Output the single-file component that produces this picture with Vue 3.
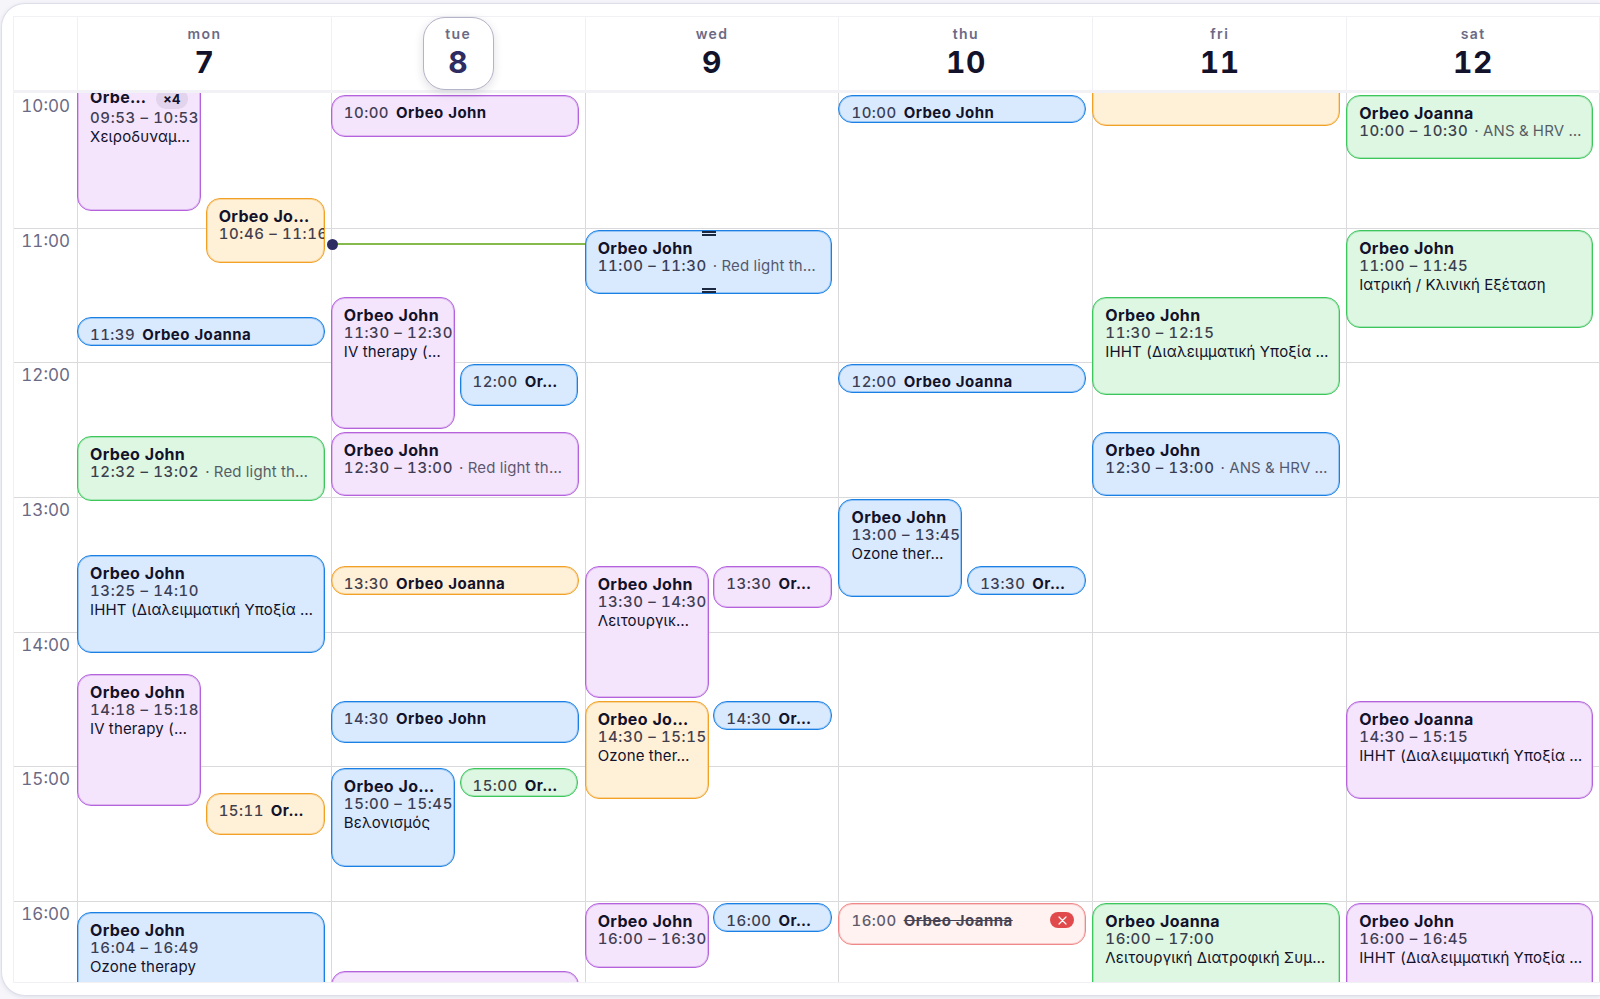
<script setup>
const FIRST_HOUR = 10
const VISIBLE_HOURS = 6.6
const hours = ['10:00', '11:00', '12:00', '13:00', '14:00', '15:00', '16:00']

const IHHT = 'IHHT (Διαλειμματική Υποξία …'
const IV = 'IV therapy (…'
const OZONE = 'Ozone ther…'
const RED = 'Red light th…'
const ANS = 'ANS & HRV …'

const days = [
  {
    name: 'mon', date: 7,
    events: [
      { start: '09:53', end: '10:53', who: 'Orbe…', what: 'Χειροδυναμ…', tone: 'purple', lane: 'left', count: '×4' },
      { start: '10:46', end: '11:16', who: 'Orbeo Jo…', tone: 'orange', lane: 'right' },
      { start: '11:39', end: '11:53', who: 'Orbeo Joanna', tone: 'blue', brief: true },
      { start: '12:32', end: '13:02', who: 'Orbeo John', what: RED, inline: true, tone: 'green' },
      { start: '13:25', end: '14:10', who: 'Orbeo John', what: IHHT, tone: 'blue' },
      { start: '14:18', end: '15:18', who: 'Orbeo John', what: IV, tone: 'purple', lane: 'left' },
      { start: '15:11', end: '15:31', who: 'Or…', tone: 'orange', lane: 'right', brief: true },
      { start: '16:04', end: '16:49', who: 'Orbeo John', what: 'Ozone therapy', tone: 'blue' }
    ]
  },
  {
    name: 'tue', date: 8, today: true, now: '11:07',
    events: [
      { start: '10:00', end: '10:20', who: 'Orbeo John', tone: 'purple', brief: true },
      { start: '11:30', end: '12:30', who: 'Orbeo John', what: IV, tone: 'purple', lane: 'left' },
      { start: '12:00', end: '12:20', who: 'Or…', tone: 'blue', lane: 'right', brief: true },
      { start: '12:30', end: '13:00', who: 'Orbeo John', what: RED, inline: true, tone: 'purple' },
      { start: '13:30', end: '13:44', who: 'Orbeo Joanna', tone: 'orange', brief: true },
      { start: '14:30', end: '14:50', who: 'Orbeo John', tone: 'blue', brief: true },
      { start: '15:00', end: '15:45', who: 'Orbeo Jo…', what: 'Βελονισμός', tone: 'blue', lane: 'left' },
      { start: '15:00', end: '15:14', who: 'Or…', tone: 'green', lane: 'right', brief: true },
      { start: '16:30', end: '17:00', who: 'Orbeo John', tone: 'purple' }
    ]
  },
  {
    name: 'wed', date: 9,
    events: [
      { start: '11:00', end: '11:30', who: 'Orbeo John', what: RED, inline: true, tone: 'blue', handles: true },
      { start: '13:30', end: '14:30', who: 'Orbeo John', what: 'Λειτουργικ…', tone: 'purple', lane: 'left' },
      { start: '13:30', end: '13:50', who: 'Or…', tone: 'purple', lane: 'right', brief: true },
      { start: '14:30', end: '15:15', who: 'Orbeo Jo…', what: OZONE, tone: 'orange', lane: 'left' },
      { start: '14:30', end: '14:44', who: 'Or…', tone: 'blue', lane: 'right', brief: true },
      { start: '16:00', end: '16:30', who: 'Orbeo John', tone: 'purple', lane: 'left' },
      { start: '16:00', end: '16:14', who: 'Or…', tone: 'blue', lane: 'right', brief: true }
    ]
  },
  {
    name: 'thu', date: 10,
    events: [
      { start: '10:00', end: '10:14', who: 'Orbeo John', tone: 'blue', brief: true },
      { start: '12:00', end: '12:14', who: 'Orbeo Joanna', tone: 'blue', brief: true },
      { start: '13:00', end: '13:45', who: 'Orbeo John', what: OZONE, tone: 'blue', lane: 'left' },
      { start: '13:30', end: '13:44', who: 'Or…', tone: 'blue', lane: 'right', brief: true },
      { start: '16:00', end: '16:20', who: 'Orbeo Joanna', tone: 'red', brief: true, cancelled: true }
    ]
  },
  {
    name: 'fri', date: 11,
    events: [
      { start: '09:30', end: '10:15', tone: 'orange' },
      { start: '11:30', end: '12:15', who: 'Orbeo John', what: IHHT, tone: 'green' },
      { start: '12:30', end: '13:00', who: 'Orbeo John', what: ANS, inline: true, tone: 'blue' },
      { start: '16:00', end: '17:00', who: 'Orbeo Joanna', what: 'Λειτουργική Διατροφική Συμ…', tone: 'green' }
    ]
  },
  {
    name: 'sat', date: 12,
    events: [
      { start: '10:00', end: '10:30', who: 'Orbeo Joanna', what: ANS, inline: true, tone: 'green' },
      { start: '11:00', end: '11:45', who: 'Orbeo John', what: 'Ιατρική / Κλινική Εξέταση', tone: 'green' },
      { start: '14:30', end: '15:15', who: 'Orbeo Joanna', what: IHHT, tone: 'purple' },
      { start: '16:00', end: '16:45', who: 'Orbeo John', what: IHHT, tone: 'purple' }
    ]
  }
]

function toHours(time) {
  const [h, m] = time.split(':').map(Number)
  return h + m / 60
}
function offset(time) {
  return ((toHours(time) - FIRST_HOUR) / VISIBLE_HOURS) * 100
}
function slot(event) {
  return { top: offset(event.start) + '%', height: offset(event.end) - offset(event.start) + '%' }
}
</script>

<template>
  <main class="page">
    <section class="card" aria-label="Week calendar">
      <header class="head">
        <div class="corner"></div>
        <div v-for="day in days" :key="day.name" class="day-head">
          <div class="day-label" :class="{ today: day.today }">
            <span class="day-name">{{ day.name }}</span>
            <span class="day-date">{{ day.date }}</span>
          </div>
        </div>
      </header>

      <div class="body">
        <div class="hours">
          <div v-for="hour in hours" :key="hour" class="hour"><span class="hour-label">{{ hour }}</span></div>
        </div>
        <div class="days">
          <div class="gutter"></div>
          <div v-for="day in days" :key="day.name" class="day">
            <div v-if="day.now" class="now" :style="{ top: offset(day.now) + '%' }"></div>
            <div v-for="(event, i) in day.events" :key="i" class="slot" :class="event.lane" :style="slot(event)">
              <article class="event" :class="[event.tone, { brief: event.brief, cancelled: event.cancelled }]">
                <template v-if="event.brief">
                  <span class="time">{{ event.start }}</span>
                  <strong class="who">{{ event.who }}</strong>
                  <span v-if="event.cancelled" class="cancel-badge">
                    <svg width="9" height="9" viewBox="0 0 9 9" role="img" aria-label="Cancelled">
                      <path d="M1 1L8 8M8 1L1 8" fill="none" stroke="#fff" stroke-width="1.2" stroke-linecap="round" />
                    </svg>
                  </span>
                </template>
                <template v-else-if="event.who">
                  <div class="title">
                    <strong class="who">{{ event.who }}</strong>
                    <span v-if="event.count" class="count">{{ event.count }}</span>
                  </div>
                  <div class="when">
                    <span class="time">{{ event.start }} – {{ event.end }}</span>
                    <span v-if="event.inline" class="aside">· {{ event.what }}</span>
                  </div>
                  <div v-if="event.what && !event.inline" class="what">{{ event.what }}</div>
                </template>
                <template v-if="event.handles">
                  <i class="handle top"></i>
                  <i class="handle bottom"></i>
                </template>
              </article>
            </div>
          </div>
        </div>
      </div>
    </section>
  </main>
</template>

<style>
body {
  background: #f5f5fa;
}
</style>

<style scoped>
.page {
  box-sizing: border-box;
  height: 100vh;
  min-height: 600px;
  padding: 3px 0 3px 1px;
  display: flex;
  overflow: hidden;
  font-family: Inter, "Noto Sans", sans-serif;
  font-variant-numeric: tabular-nums;
  color: #12122a;
}
.card {
  flex: 1;
  min-width: 0;
  box-sizing: border-box;
  display: flex;
  flex-direction: column;
  padding: 12px 0 12px 11px;
  background: #fff;
  border: 1px solid #dedee9;
  border-right: 0;
  border-radius: 24px 0 0 24px;
  box-shadow: 0 1px 4px rgba(40, 40, 90, 0.1);
}
.head,
.days {
  display: grid;
  grid-template-columns: 63px repeat(6, minmax(0, 1fr));
}
.head {
  position: relative;
  z-index: 2;
  height: 73px;
  border-top: 1px solid #f1f1f5;
  border-left: 1px solid #f1f1f5;
  border-bottom: 3px solid #f2f2f6;
}
.day-head {
  display: flex;
  justify-content: center;
  border-left: 1px solid #f1f1f5;
}
.day-head:last-child {
  border-right: 1px solid #f1f1f5;
}
.day-label {
  box-sizing: border-box;
  width: 71px;
  height: 73px;
  padding-top: 7px;
  display: flex;
  flex-direction: column;
  align-items: center;
  border: 1px solid transparent;
  border-radius: 22px;
}
.day-label.today {
  background: #fff;
  border-color: #b4b3c8;
  box-shadow: 0 3px 10px rgba(30, 30, 70, 0.14);
}
.day-name {
  font-size: 14px;
  line-height: 18px;
  font-weight: 600;
  letter-spacing: 0.1em;
  color: #6b6a85;
}
.day-date {
  font-size: 30px;
  line-height: 38px;
  font-weight: 700;
  letter-spacing: 0.02em;
}
.today .day-date {
  color: #2f2c62;
}
.body {
  flex: 1;
  min-height: 0;
  display: grid;
  grid-template: minmax(0, 1fr) / minmax(0, 1fr);
  overflow: hidden;
  border-left: 1px solid #f1f1f5;
  border-bottom: 1px solid #f1f1f5;
}
.hours,
.days {
  grid-area: 1 / 1;
}
.hour {
  box-sizing: border-box;
  height: calc(100% / 6.6);
  border-top: 1px solid #dadadc;
}
.hour:first-child {
  border-top-color: transparent;
}
.hour-label {
  display: block;
  width: 56px;
  padding-top: 2px;
  text-align: right;
  font-size: 17px;
  line-height: 20px;
  color: #6b6a85;
}
.day {
  position: relative;
  border-left: 1px solid #dadadc;
}
.day:last-child {
  border-right: 1px solid #dadadc;
}
.now {
  position: absolute;
  left: 0;
  right: 0;
  height: 2px;
  background: #86ba4c;
}
.now::before {
  content: "";
  position: absolute;
  left: -5px;
  top: -4px;
  width: 11px;
  height: 11px;
  border-radius: 50%;
  background: #2f2c62;
}
.slot {
  position: absolute;
  left: -1px;
  width: 98%;
  box-sizing: border-box;
  padding: 2px 0 1px;
}
.slot.left {
  width: 49%;
}
.slot.right {
  left: 50.5%;
  width: 47%;
}
.event {
  position: relative;
  box-sizing: border-box;
  height: 100%;
  padding: 9px 11px 0 12px;
  overflow: hidden;
  white-space: nowrap;
  border: 1px solid var(--line);
  border-radius: 14px;
  background: var(--fill);
  box-shadow: inset 0 0 0 1px color-mix(in srgb, var(--line) 35%, transparent);
  font-size: 15px;
  line-height: 18px;
  letter-spacing: 0.03em;
}
.brief {
  display: flex;
  align-items: baseline;
  gap: 7px;
  padding-top: 8px;
}
.title {
  display: flex;
  align-items: flex-start;
  gap: 10px;
  font-size: 16px;
  line-height: 17px;
  letter-spacing: 0.02em;
}
.who {
  font-weight: 700;
}
.count {
  flex: none;
  padding: 0 7px;
  border-radius: 10px;
  background: rgba(30, 10, 50, 0.08);
  font-size: 13px;
  line-height: 20px;
  font-weight: 700;
}
.when {
  display: flex;
  gap: 6px;
}
.time {
  flex: none;
  font-weight: 500;
  opacity: 0.8;
}
.when .time {
  letter-spacing: 0.04em;
}
.aside {
  letter-spacing: 0.01em;
  opacity: 0.68;
}
.what {
  padding-top: 1px;
  letter-spacing: 0.01em;
}
.purple { --fill: #f4e5fc; --line: #b562dd; }
.blue { --fill: #d9eaff; --line: #1b80e3; }
.orange { --fill: #fff0d8; --line: #f0a126; }
.green { --fill: #def7e3; --line: #3cc65c; }
.red { --fill: #fff2f1; --line: #ef8888; }
.cancelled .who {
  text-decoration: line-through;
  opacity: 0.78;
}
.cancelled .time {
  opacity: 0.68;
}
.cancel-badge {
  align-self: flex-start;
  margin-left: auto;
  width: 24px;
  height: 16px;
  display: flex;
  align-items: center;
  justify-content: center;
  border-radius: 8px;
  background: #e04a4c;
}
.handle {
  position: absolute;
  left: 50%;
  width: 14px;
  height: 1px;
  margin-left: -7px;
  border-top: 2px solid #1c2740;
  border-bottom: 2px solid #1c2740;
}
.handle.top {
  top: 0;
}
.handle.bottom {
  bottom: 0;
}
</style>
